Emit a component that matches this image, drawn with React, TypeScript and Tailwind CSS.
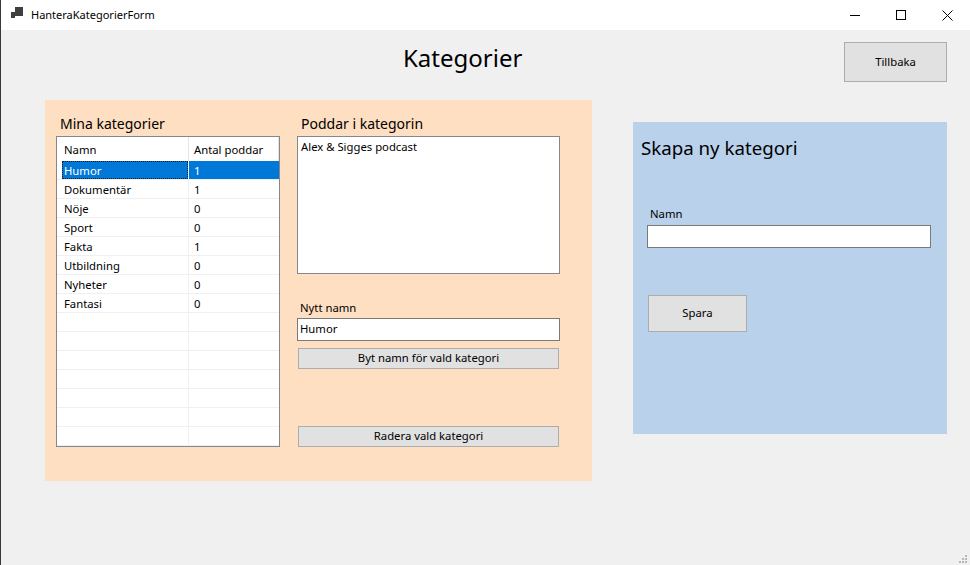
import React from "react";

const font = { fontFamily: '"Noto Sans", "Open Sans", sans-serif' };

const rows: [string, string][] = [
  ["Humor", "1"],
  ["Dokumentär", "1"],
  ["Nöje", "0"],
  ["Sport", "0"],
  ["Fakta", "1"],
  ["Utbildning", "0"],
  ["Nyheter", "0"],
  ["Fantasi", "0"],
  ["", ""],
  ["", ""],
  ["", ""],
  ["", ""],
  ["", ""],
  ["", ""],
  ["", ""],
];

function WinButton({ children, className }: { children: React.ReactNode; className: string }) {
  return (
    <div
      className={
        "flex items-center justify-center border border-[#adadad] bg-[#e1e1e1] text-[11.3px] text-black " +
        className
      }
    >
      {children}
    </div>
  );
}

export default function App() {
  return (
    <div
      className="flex h-[565px] w-[970px] flex-col overflow-hidden border-l border-[#3a3a3a] bg-[#f0f0f0] text-black"
      style={font}
    >
      {/* Title bar */}
      <div className="flex h-[30px] shrink-0 items-center bg-white">
        <svg width="13" height="12" viewBox="0 0 13 12" className="ml-[10px] mb-[5px]">
          <rect x="4" y="0" width="8" height="9" fill="#3f3f3f" />
          <rect x="0" y="5" width="4" height="6" fill="#3f3f3f" />
        </svg>
        <span className="ml-[7px] mb-[2px] text-[11px] leading-none">HanteraKategorierForm</span>
        <div className="ml-auto flex h-full">
          <div className="flex w-[46px] items-center justify-center">
            <svg width="10" height="10" viewBox="0 0 10 10">
              <line x1="0" y1="5.5" x2="10" y2="5.5" stroke="#000" strokeWidth="1" />
            </svg>
          </div>
          <div className="flex w-[46px] items-center justify-center">
            <svg width="10" height="10" viewBox="0 0 10 10">
              <rect x="0.5" y="0.5" width="9" height="9" fill="none" stroke="#000" strokeWidth="1" />
            </svg>
          </div>
          <div className="flex w-[46px] items-center justify-center">
            <svg width="11" height="11" viewBox="0 0 11 11">
              <line x1="0.5" y1="0.5" x2="10.5" y2="10.5" stroke="#000" strokeWidth="1" />
              <line x1="10.5" y1="0.5" x2="0.5" y2="10.5" stroke="#000" strokeWidth="1" />
            </svg>
          </div>
        </div>
      </div>

      {/* Client area */}
      <div className="relative flex flex-1 flex-col">
        <div className="flex h-[70px] items-start">
          <div className="ml-[402px] mt-[12px] text-[24px] leading-[32px]">Kategorier</div>
          <WinButton className="ml-auto mr-[23px] mt-[12px] h-[40px] w-[103px]">Tillbaka</WinButton>
        </div>

        <div className="flex items-start pl-[44px]">
          {/* Orange panel */}
          <div className="flex h-[381px] w-[547px] bg-[#ffdfc1] pl-[11px] pt-[14px]">
            {/* Left column */}
            <div className="flex w-[224px] flex-col">
              <div className="mb-[2px] pl-[4px] text-[14px] leading-[20px]">Mina kategorier</div>
              <div className="h-[311px] border border-[#828790] bg-white text-[11.3px]">
                <div className="flex h-[24px]">
                  <div className="flex h-full w-[132px] items-center border-r border-[#e5e5e5] pl-[7px] pt-[2px]">Namn</div>
                  <div className="flex h-full w-[90px] items-center border-r border-[#e5e5e5] pl-[5px] pt-[2px]">Antal poddar</div>
                </div>
                {rows.map(([n, c], i) => {
                  const sel = i === 0;
                  return (
                    <div key={i} className="flex h-[19px] border-b border-[#f0f0f0] leading-[16px]">
                      <div className="flex w-[132px] border-r border-[#f0f0f0] pl-[5px]">
                        <div
                          className={
                            sel
                              ? "w-full bg-[#0078d7] pl-[2px] pt-[2px] text-white outline-1 outline-dotted outline-[#1a1a1a] outline-offset-[-1px]"
                              : "w-full pl-[2px] pt-[2px]"
                          }
                        >
                          {n}
                        </div>
                      </div>
                      <div
                        className={
                          sel
                            ? "w-[90px] bg-[#0078d7] pl-[5px] pt-[2px] text-white"
                            : "w-[90px] pl-[5px] pt-[2px]"
                        }
                      >
                        {c}
                      </div>
                    </div>
                  );
                })}
              </div>
            </div>

            {/* Right column */}
            <div className="ml-[17px] flex w-[263px] flex-col">
              <div className="mb-[2px] pl-[4px] text-[14px] leading-[20px]">Poddar i kategorin</div>
              <div className="h-[138px] border border-[#828790] bg-white pl-[3px] pt-[1px] text-[11.3px] leading-[18px]">
                Alex &amp; Sigges podcast
              </div>
              <div className="mt-[26px] pl-[3px] text-[11.3px] leading-[16px]">Nytt namn</div>
              <div className="mt-[2px] flex h-[23px] items-center border border-[#7a7a7a] bg-white pl-[2px] text-[11.3px]">
                Humor
              </div>
              <WinButton className="ml-[1px] mt-[7px] h-[21px] w-[261px]">Byt namn för vald kategori</WinButton>
              <WinButton className="ml-[1px] mt-[57px] h-[21px] w-[261px]">Radera vald kategori</WinButton>
            </div>
          </div>

          {/* Blue panel */}
          <div className="ml-[41px] mt-[22px] flex h-[312px] w-[314px] flex-col bg-[#b9d1ea] pt-[12px]">
            <div className="pl-[8px] text-[18.7px] leading-[28px]">Skapa ny kategori</div>
            <div className="ml-[17px] mt-[44px] text-[11.3px] leading-[16px]">Namn</div>
            <div className="ml-[14px] mt-[3px] h-[23px] w-[284px] border border-[#7a7a7a] bg-white" />
            <WinButton className="ml-[15px] mt-[47px] h-[37px] w-[99px]">Spara</WinButton>
          </div>
        </div>

        {/* resize grip */}
        <svg width="9" height="9" viewBox="0 0 9 9" className="absolute bottom-[1px] right-[2px]">
          <rect x="6" y="0" width="2" height="2" fill="#b8b8b8" />
          <rect x="3" y="3" width="2" height="2" fill="#b8b8b8" />
          <rect x="6" y="3" width="2" height="2" fill="#b8b8b8" />
          <rect x="0" y="6" width="2" height="2" fill="#b8b8b8" />
          <rect x="3" y="6" width="2" height="2" fill="#b8b8b8" />
          <rect x="6" y="6" width="2" height="2" fill="#b8b8b8" />
        </svg>
      </div>
    </div>
  );
}
